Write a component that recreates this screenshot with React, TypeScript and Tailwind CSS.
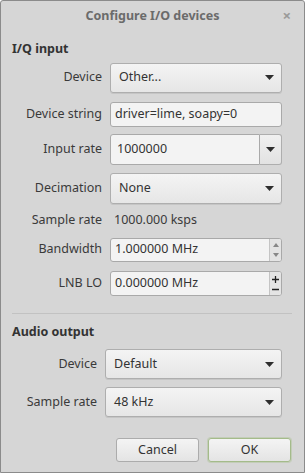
import React from 'react';

const font = { fontFamily: '"Noto Sans", "Open Sans", sans-serif' };

function Arrow() {
    return (
        <svg width="9" height="5" viewBox="0 0 9 5" className="shrink-0">
            <path d="M0 0 H9 L4.5 5 Z" fill="#2e2e2e" />
        </svg>
    );
}

function Combo({ value, h = 'h-[30px]' }: { value: string; h?: string }) {
    return (
        <div
            className={`${h} flex-1 flex items-center justify-between pl-[8px] pr-[7px] rounded-[3px] border border-[#aeaeae] bg-gradient-to-b from-[#f4f4f4] to-[#e6e6e6] shadow-[0_1px_0_rgba(0,0,0,0.08)] text-[#333]`}
        >
            <span>{value}</span>
            <Arrow />
        </div>
    );
}

function TextBox({ value, h = 'h-[24px]', children }: { value: string; h?: string; children?: React.ReactNode }) {
    return (
        <div className={`${h} flex-1 flex items-stretch rounded-[3px] border border-[#a9a9a9] bg-[#f3f3f3] text-[#333] overflow-hidden`}>
            <span className="flex-1 flex items-center pl-[4px]">{value}</span>
            {children}
        </div>
    );
}

function Row({ label, labelW, children, className = '' }: { label: string; labelW: string; children: React.ReactNode; className?: string }) {
    return (
        <div className={`flex items-center ${className}`}>
            <div className={`${labelW} shrink-0 text-right pr-[8px] text-[#3a3a3a]`}>{label}</div>
            {children}
        </div>
    );
}

export default function App() {
    return (
        <div
            style={font}
            className="w-[305px] h-[473px] border border-[#8b8b8b] rounded-t-[3px] bg-[#d6d6d6] text-[12.5px] leading-none flex flex-col"
        >
            <div className="h-[30px] shrink-0 relative flex items-center justify-center">
                <span className="font-bold text-[#6b6b6b] text-[12.5px]">Configure I/O devices</span>
                <span className="absolute right-[13px] top-[7px] text-[#9a9a9a] text-[15px] font-bold">×</span>
            </div>

            <div className="flex-1 flex flex-col pl-[11px] pr-[12px]">
                <div className="font-bold text-[#333] mt-[12px]">I/Q input</div>

                <div className="flex flex-col pr-[10px]">
                    <Row label="Device" labelW="w-[98px]" className="mt-[7px]">
                        <Combo value="Other..." h="h-[30px]" />
                    </Row>
                    <Row label="Device string" labelW="w-[98px]" className="mt-[9px]">
                        <TextBox value="driver=lime, soapy=0" h="h-[25px]" />
                    </Row>
                    <Row label="Input rate" labelW="w-[98px]" className="mt-[7px]">
                        <div className="flex-1 flex h-[31px]">
                            <div className="flex-1 flex items-center pl-[6px] rounded-l-[3px] border border-[#a9a9a9] bg-[#f3f3f3] text-[#333]">
                                1000000
                            </div>
                            <div className="w-[22px] flex items-center justify-center rounded-r-[3px] border border-l-0 border-[#aeaeae] bg-gradient-to-b from-[#f0f0f0] to-[#e2e2e2]">
                                <Arrow />
                            </div>
                        </div>
                    </Row>
                    <Row label="Decimation" labelW="w-[98px]" className="mt-[8px]">
                        <Combo value="None" h="h-[31px]" />
                    </Row>
                    <Row label="Sample rate" labelW="w-[98px]" className="mt-[8px] h-[18px]">
                        <span className="pl-[4px] text-[#3a3a3a]">1000.000 ksps</span>
                    </Row>
                    <Row label="Bandwidth" labelW="w-[98px]" className="mt-[8px]">
                        <TextBox value="1.000000 MHz" h="h-[24px]">
                            <div className="w-[12px] flex flex-col items-center justify-between py-[4px] border-l border-[#c4c4c4] bg-[#e4e4e4]">
                                <svg width="6" height="4" viewBox="0 0 6 4"><path d="M0 4 L3 0 L6 4 Z" fill="#888" /></svg>
                                <svg width="6" height="4" viewBox="0 0 6 4"><path d="M0 0 L6 0 L3 4 Z" fill="#888" /></svg>
                            </div>
                        </TextBox>
                    </Row>
                    <Row label="LNB LO" labelW="w-[98px]" className="mt-[9px]">
                        <TextBox value="0.000000 MHz" h="h-[25px]">
                            <div className="w-[12px] flex flex-col items-center justify-between py-[4px] border-l border-[#c4c4c4] bg-[#e4e4e4]">
                                <svg width="7" height="7" viewBox="0 0 7 7"><path d="M3.5 0 V7 M0 3.5 H7" stroke="#222" strokeWidth="1.3" /></svg>
                                <svg width="7" height="3" viewBox="0 0 7 3"><path d="M0 1.5 H7" stroke="#222" strokeWidth="1.3" /></svg>
                            </div>
                        </TextBox>
                    </Row>
                </div>

                <div className="mt-[17px] h-px bg-[#f2f2f2] border-t border-[#c2c2c2]" />

                <div className="font-bold text-[#333] mt-[12px]">Audio output</div>

                <div className="flex flex-col pr-[10px]">
                    <Row label="Device" labelW="w-[93px]" className="mt-[11px]">
                        <Combo value="Default" h="h-[30px]" />
                    </Row>
                    <Row label="Sample rate" labelW="w-[93px]" className="mt-[8px]">
                        <Combo value="48 kHz" h="h-[30px]" />
                    </Row>
                </div>

                <div className="flex justify-end gap-[9px] mt-[21px] pr-[1px]">
                    <button className="w-[83px] h-[24px] rounded-[3px] border border-[#acacac] bg-gradient-to-b from-[#f4f4f4] to-[#e4e4e4] text-[#333]">
                        Cancel
                    </button>
                    <button className="w-[83px] h-[24px] rounded-[3px] border border-[#a4bb8a] bg-gradient-to-b from-[#f4f4f4] to-[#e4e4e4] text-[#333] shadow-[0_0_0_1px_rgba(160,190,130,0.35)]">
                        OK
                    </button>
                </div>
            </div>
        </div>
    );
}
